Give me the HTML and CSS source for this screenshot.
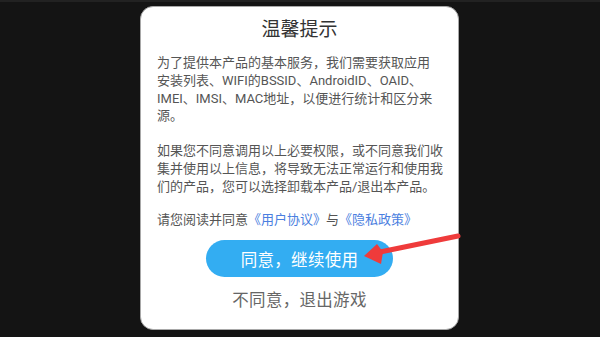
FILE: index.html
```html
<!DOCTYPE html>
<html lang="zh-CN">
<head>
    <meta charset="UTF-8">
    <meta name="viewport" content="width=device-width, initial-scale=1.0">
    <title>温馨提示</title>
    <link rel="stylesheet" href="styles.css">
</head>
<body>
    <div class="screen">
        <div class="dialog">
            <h2 class="dialog-title">温馨提示</h2>

            <p class="dialog-text">为了提供本产品的基本服务，我们需要获取应用<br>安装列表、WIFI的BSSID、AndroidID、OAID、<br>IMEI、IMSI、MAC地址，以便进行统计和区分来<br>源。</p>

            <p class="dialog-text gap-lg">如果您不同意调用以上必要权限，或不同意我们收<br>集并使用以上信息，将导致无法正常运行和使用我<br>们的产品，您可以选择卸载本产品/退出本产品。</p>

            <p class="dialog-text gap-md">请您阅读并同意<span class="link">《用户协议》</span>与<span class="link">《隐私政策》</span></p>

            <button class="btn-agree">同意，继续使用</button>
            <div class="btn-refuse">不同意，退出游戏</div>
        </div>

        <!-- 标注箭头 -->
        <svg class="arrow" viewBox="0 0 600 337">
            <line x1="458" y1="234" x2="380" y2="250" stroke="#ef3b3b" stroke-width="5" stroke-linecap="round"/>
            <polygon points="364,254 377,242 383,250 381,262" fill="#ef3b3b"/>
        </svg>
    </div>
</body>
</html>
```

FILE: styles.css
```css
* {
    margin: 0;
    padding: 0;
    box-sizing: border-box;
}

body {
    font-family: Roboto, "Noto Sans CJK SC", sans-serif;
    background: #141414;
    color: #555;
}

.screen {
    width: 600px;
    height: 337px;
    position: relative;
    overflow: hidden;
    padding-top: 6px;
    border-top: 2px solid #222;
    display: flex;
    justify-content: center;
}

.dialog {
    width: 319px;
    height: 324px;
    margin-left: -1px;
    margin-top: -2px;
    background: #fff;
    border: 1px solid #a8a8a8;
    border-radius: 13px;
    padding: 11px 16px 0;
    display: flex;
    flex-direction: column;
    align-items: stretch;
}

.dialog-title {
    font-size: 19px;
    font-weight: normal;
    line-height: 24px;
    color: #333;
    text-align: center;
    margin-bottom: 12px;
}

.dialog-text {
    font-size: 13px;
    line-height: 17.8px;
    color: #555;
    white-space: nowrap;
}

.gap-lg { margin-top: 17px; }
.gap-md { margin-top: 15px; }

.link {
    color: #4a7ee0;
}

.btn-agree {
    align-self: center;
    margin-top: 12px;
    width: 187px;
    height: 37px;
    border: none;
    border-radius: 19px;
    background: #33adf2;
    color: #fff;
    font-family: inherit;
    font-size: 16.5px;
    letter-spacing: 0.3px;
}

.btn-refuse {
    margin-top: 12px;
    text-align: center;
    font-size: 16.5px;
    line-height: 24px;
    color: #666;
    letter-spacing: 0.3px;
}

/* 红色标注箭头 */
.arrow {
    position: absolute;
    left: 0;
    top: 0;
    width: 600px;
    height: 337px;
    pointer-events: none;
}
```
